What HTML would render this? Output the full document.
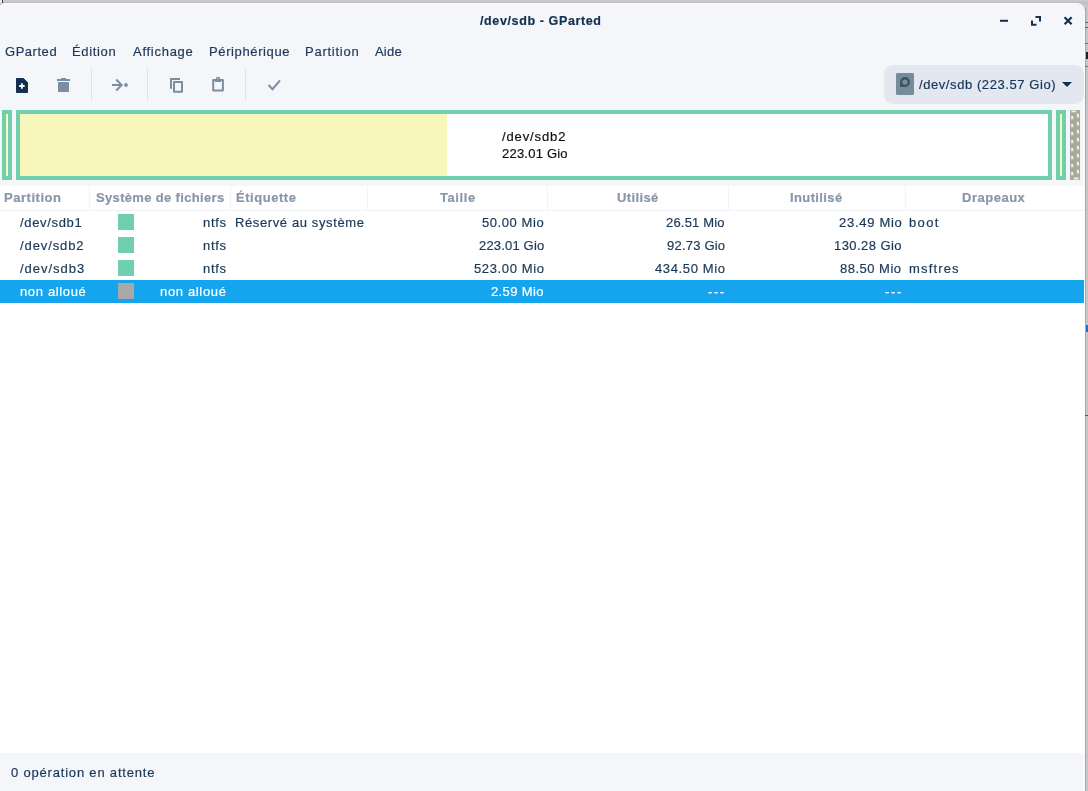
<!DOCTYPE html>
<html><head><meta charset="utf-8">
<style>
*{box-sizing:border-box;margin:0;padding:0}
html,body{width:1088px;height:791px;overflow:hidden;background:#c8c8c8;font-family:"Liberation Sans",sans-serif;}
.abs{position:absolute}
.x{position:absolute;white-space:nowrap;line-height:20px;will-change:transform;-webkit-text-stroke:0.2px currentColor}
.hs{position:absolute;top:186px;width:1px;height:24px;background:#f1f3f7}
.sq{position:absolute;width:16px;height:16px;background:#70d0ae}
</style></head><body>
<div class="abs" style="left:1085px;top:0;width:3px;height:791px;background:#c6c6c6"></div>
<div class="abs" style="left:1085px;top:8px;width:1px;height:783px;background:#a9a9a9"></div>
<div class="abs" style="left:1085px;top:22px;width:3px;height:1px;background:#666"></div>
<div class="abs" style="left:1085px;top:27px;width:3px;height:1px;background:#666"></div>
<div class="abs" style="left:1085px;top:43px;width:3px;height:1px;background:#777"></div>
<div class="abs" style="left:1086px;top:52px;width:2px;height:7px;background:#222"></div>
<div class="abs" style="left:1085px;top:66px;width:3px;height:1px;background:#777"></div>
<div class="abs" style="left:1086px;top:325px;width:2px;height:7px;background:#1c6fd6"></div>
<div class="abs" style="left:1085px;top:415px;width:3px;height:1px;background:#555"></div>
<div class="abs" style="left:0;top:0;width:1088px;height:3px;background:#c9c9c9"></div>
<div class="abs" style="left:0;top:2px;width:1088px;height:1px;background:#bdbdbd"></div>
<div class="abs" style="left:2px;top:0;width:1px;height:3px;background:#444"></div>
<div class="abs" style="left:0;top:0;width:2px;height:3px;background:#e8e8e8"></div>
<div class="abs" style="left:-2px;top:3px;width:1087px;height:800px;background:#f5f6fa;border-radius:8px 8.5px 0 0;border-right:1px solid #fafbfd;border-top:1px solid #fafbff"></div>
<div class="abs" style="left:0;top:186px;width:1085px;height:567px;background:#fff"></div>

<!-- toolbar icons -->
<svg class="abs" style="left:0;top:60px" width="300" height="50" viewBox="0 60 300 50">
  <path d="M16.5 78.5 h7 l4 4 v10 h-11 z" fill="#13304f" stroke="#13304f" stroke-width="1" stroke-linejoin="round"/>
  <path d="M21.9 83.3 v5.4 M19.2 86 h5.4" stroke="#fff" stroke-width="1.8"/>
  <rect x="57" y="79" width="13" height="2" fill="#7a8da2"/>
  <rect x="61" y="78" width="5" height="2" fill="#7a8da2"/>
  <rect x="58" y="82" width="11" height="10" rx="0.7" fill="#7a8da2"/>
  <rect x="91" y="68" width="1" height="33" fill="#dfe3ea"/>
  <path d="M112 85 h9.5" stroke="#7a8da2" stroke-width="2"/>
  <path d="M116.2 79.5 l5.5 5.5 l-5.5 5.5" stroke="#7a8da2" stroke-width="2" fill="none"/>
  <circle cx="126" cy="85" r="1.9" fill="#7a8da2"/>
  <rect x="147" y="68" width="1" height="33" fill="#dfe3ea"/>
  <path d="M171 88.7 v-9.6 h9" stroke="#7a8da2" stroke-width="2" fill="none"/>
  <rect x="174" y="82" width="8" height="9.8" rx="0.1" stroke="#7a8da2" stroke-width="2" fill="none"/>
  <rect x="213.2" y="80" width="9.7" height="10.6" rx="0.1" stroke="#7a8da2" stroke-width="2" fill="none"/>
  <circle cx="218" cy="79" r="1.5" stroke="#7a8da2" stroke-width="1.5" fill="none"/>
  <rect x="215" y="80" width="6" height="2" fill="#7a8da2"/>
  <rect x="245" y="68" width="1" height="33" fill="#dfe3ea"/>
  <path d="M268.5 85 l4 4.2 l7.5 -8.8" stroke="#7a8da2" stroke-width="2" fill="none"/>
</svg>

<!-- device combobox -->
<div class="abs" style="left:884px;top:65px;width:200px;height:39px;background:#e3e7ef;border-radius:9px"></div>
<svg class="abs" style="left:896px;top:73px" width="18" height="22" viewBox="0 0 18 22">
  <rect x="0" y="0" width="18" height="22" rx="1.2" fill="#768c9b"/>
  <path d="M4 9 V14 H9 A5 5 0 1 0 4 9 Z" fill="#3b5566"/>
  <circle cx="9" cy="9" r="2.6" fill="#7a8f9d"/>
</svg>
<svg class="abs" style="left:1062px;top:82px" width="10" height="6" viewBox="0 0 10 6"><path d="M0 0 h10 l-5 5 z" fill="#13304f"/></svg>

<!-- partition graph -->
<div class="abs" style="left:2px;top:110px;width:10px;height:70px;border:4px solid #70d0ae;background:#fff"></div>
<div class="abs" style="left:6px;top:114px;width:1px;height:62px;background:#f7f6bb"></div>
<div class="abs" style="left:16px;top:110px;width:1036px;height:70px;border:4px solid #70d0ae;background:#fff"></div>
<div class="abs" style="left:20px;top:114px;width:427px;height:62px;background:#f7f6bb"></div>
<div class="abs" style="left:1056px;top:110px;width:10px;height:70px;border:4px solid #70d0ae;background:#f7f6bb"></div>
<svg class="abs" style="left:1070px;top:110px" width="10" height="70" viewBox="0 0 10 70">
  <rect width="10" height="70" fill="#a8a8a8"/>
  <path d="M2.2 5.9 V66" stroke="#f7f6bb" stroke-width="2" stroke-dasharray="3.4 4.6" fill="none"/>
  <path d="M7.9 3.7 V64" stroke="#f7f6bb" stroke-width="2" stroke-dasharray="3.8 4.2" fill="none"/>
  <path d="M1.4 1.4 H6.2 M3.9 68.5 H8.6" stroke="#f7f6bb" stroke-width="1.8" fill="none"/>
</svg>

<!-- tree header -->
<div class="abs" style="left:0;top:210px;width:1085px;height:1px;background:#f0f2f6"></div>
<div class="hs" style="left:89px"></div>
<div class="hs" style="left:230px"></div>
<div class="hs" style="left:367px"></div>
<div class="hs" style="left:547px"></div>
<div class="hs" style="left:728px"></div>
<div class="hs" style="left:905px"></div>

<!-- selection -->
<div class="abs" style="left:0;top:280px;width:1084px;height:23px;background:#14a5ee"></div>
<div class="sq" style="left:118px;top:214px"></div>
<div class="sq" style="left:118px;top:237px"></div>
<div class="sq" style="left:118px;top:260px"></div>
<div class="sq" style="left:118px;top:283px;background:#a8a8a8"></div>

<!-- window controls -->
<svg class="abs" style="left:995px;top:12px" width="80" height="18" viewBox="995 12 80 18">
  <path d="M1000 20.8 h8" stroke="#13304f" stroke-width="2"/>
  <path d="M1032 20.5 v4.2 h4.5 M1035.5 17 h4.5 v4.5" stroke="#13304f" stroke-width="2" fill="none"/>
  <path d="M1064.6 17.3 l7 7 M1071.6 17.3 l-7 7" stroke="#13304f" stroke-width="2.2"/>
</svg>

<div class="x" style="left:480.3px;top:10.9px;font-size:12.5px;font-weight:700;letter-spacing:0.618px;color:#12304f">/dev/sdb - GParted</div>
<div class="x" style="left:5.4px;top:42.0px;font-size:13px;font-weight:400;letter-spacing:0.533px;color:#1b3859">GParted</div>
<div class="x" style="left:72.3px;top:42.0px;font-size:13px;font-weight:400;letter-spacing:0.667px;color:#1b3859">Édition</div>
<div class="x" style="left:132.5px;top:42.0px;font-size:13px;font-weight:400;letter-spacing:0.725px;color:#1b3859">Affichage</div>
<div class="x" style="left:208.5px;top:42.0px;font-size:13px;font-weight:400;letter-spacing:0.618px;color:#1b3859">Périphérique</div>
<div class="x" style="left:304.5px;top:42.0px;font-size:13px;font-weight:400;letter-spacing:0.75px;color:#1b3859">Partition</div>
<div class="x" style="left:374.6px;top:42.0px;font-size:13px;font-weight:400;letter-spacing:0.2px;color:#1b3859">Aide</div>
<div class="x" style="left:919.0px;top:74.5px;font-size:13px;font-weight:400;letter-spacing:0.575px;color:#17355a">/dev/sdb (223.57 Gio)</div>
<div class="x" style="left:501.5px;top:127.0px;font-size:13px;font-weight:400;letter-spacing:0.875px;color:#111">/dev/sdb2</div>
<div class="x" style="left:501.5px;top:144.0px;font-size:13px;font-weight:400;letter-spacing:0.222px;color:#111">223.01 Gio</div>
<div class="x" style="left:3.5px;top:187.9px;font-size:13px;font-weight:700;letter-spacing:0.525px;color:#8797aa">Partition</div>
<div class="x" style="left:96.0px;top:187.9px;font-size:13px;font-weight:700;letter-spacing:0.333px;color:#8797aa">Système de fichiers</div>
<div class="x" style="left:236.3px;top:187.9px;font-size:13px;font-weight:700;letter-spacing:0.538px;color:#8797aa">Étiquette</div>
<div class="x" style="left:439.7px;top:187.9px;font-size:13px;font-weight:700;letter-spacing:0.58px;color:#8797aa">Taille</div>
<div class="x" style="left:617.4px;top:187.9px;font-size:13px;font-weight:700;letter-spacing:0.367px;color:#8797aa">Utilisé</div>
<div class="x" style="left:790.4px;top:187.9px;font-size:13px;font-weight:700;letter-spacing:0.388px;color:#8797aa">Inutilisé</div>
<div class="x" style="left:962.4px;top:187.9px;font-size:13px;font-weight:700;letter-spacing:0.514px;color:#8797aa">Drapeaux</div>
<div class="x" style="left:20.2px;top:213.0px;font-size:13px;font-weight:400;letter-spacing:0.662px;color:#1b3859">/dev/sdb1</div>
<div class="x" style="left:20.2px;top:236.0px;font-size:13px;font-weight:400;letter-spacing:0.9px;color:#1b3859">/dev/sdb2</div>
<div class="x" style="left:20.2px;top:259.0px;font-size:13px;font-weight:400;letter-spacing:0.975px;color:#1b3859">/dev/sdb3</div>
<div class="x" style="left:19.5px;top:282.0px;font-size:13px;font-weight:400;letter-spacing:0.644px;color:#ffffff">non alloué</div>
<div class="x" style="left:203.3px;top:213.0px;font-size:13px;font-weight:400;letter-spacing:0.65px;color:#1b3859">ntfs</div>
<div class="x" style="left:203.3px;top:236.0px;font-size:13px;font-weight:400;letter-spacing:0.65px;color:#1b3859">ntfs</div>
<div class="x" style="left:203.3px;top:259.0px;font-size:13px;font-weight:400;letter-spacing:0.65px;color:#1b3859">ntfs</div>
<div class="x" style="left:160.4px;top:282.0px;font-size:13px;font-weight:400;letter-spacing:0.656px;color:#ffffff">non alloué</div>
<div class="x" style="left:234.6px;top:213.0px;font-size:13px;font-weight:400;letter-spacing:0.612px;color:#1b3859">Réservé au système</div>
<div class="x" style="left:481.8px;top:213.0px;font-size:13px;font-weight:400;letter-spacing:0.575px;color:#1b3859">50.00 Mio</div>
<div class="x" style="left:478.8px;top:236.0px;font-size:13px;font-weight:400;letter-spacing:0.178px;color:#1b3859">223.01 Gio</div>
<div class="x" style="left:473.8px;top:259.0px;font-size:13px;font-weight:400;letter-spacing:0.622px;color:#1b3859">523.00 Mio</div>
<div class="x" style="left:490.7px;top:282.0px;font-size:13px;font-weight:400;letter-spacing:0.386px;color:#ffffff">2.59 Mio</div>
<div class="x" style="left:665.9px;top:213.0px;font-size:13px;font-weight:400;letter-spacing:0.188px;color:#1b3859">26.51 Mio</div>
<div class="x" style="left:666.7px;top:236.0px;font-size:13px;font-weight:400;letter-spacing:0.212px;color:#1b3859">92.73 Gio</div>
<div class="x" style="left:654.8px;top:259.0px;font-size:13px;font-weight:400;letter-spacing:0.622px;color:#1b3859">434.50 Mio</div>
<div class="x" style="left:708.0px;top:282.0px;font-size:13px;font-weight:400;letter-spacing:1.6px;color:#ffffff">---</div>
<div class="x" style="left:838.6px;top:213.0px;font-size:13px;font-weight:400;letter-spacing:0.712px;color:#1b3859">23.49 Mio</div>
<div class="x" style="left:834.4px;top:236.0px;font-size:13px;font-weight:400;letter-spacing:0.433px;color:#1b3859">130.28 Gio</div>
<div class="x" style="left:840.4px;top:259.0px;font-size:13px;font-weight:400;letter-spacing:0.487px;color:#1b3859">88.50 Mio</div>
<div class="x" style="left:884.8px;top:282.0px;font-size:13px;font-weight:400;letter-spacing:1.65px;color:#ffffff">---</div>
<div class="x" style="left:909.3px;top:213.0px;font-size:13px;font-weight:400;letter-spacing:1.333px;color:#1b3859">boot</div>
<div class="x" style="left:909.3px;top:259.0px;font-size:13px;font-weight:400;letter-spacing:1.167px;color:#1b3859">msftres</div>
<div class="x" style="left:11.25px;top:762.8px;font-size:13px;font-weight:400;letter-spacing:0.807px;color:#1b3859">0 opération en attente</div>
</body></html>
